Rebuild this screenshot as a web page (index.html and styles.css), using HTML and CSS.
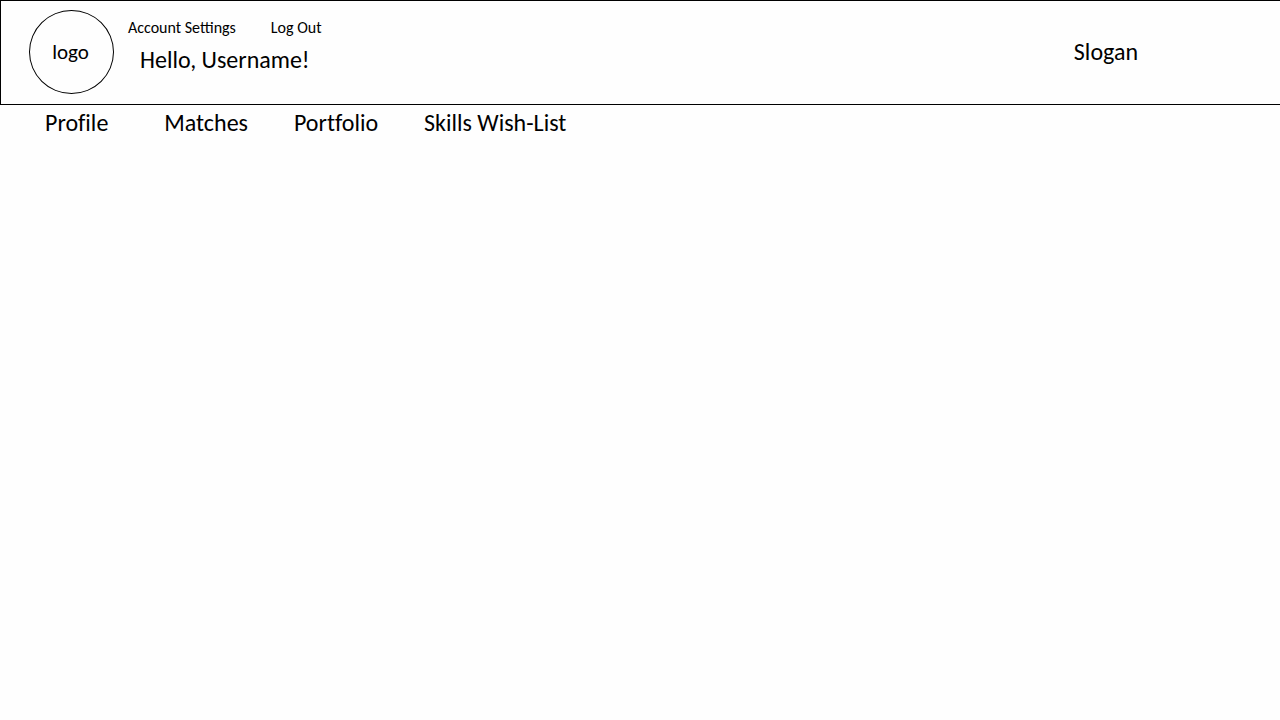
FILE: index.html
```html
<!DOCTYPE html>
<html lang="en">
<head>
<meta charset="utf-8">
<meta name="viewport" content="width=device-width, initial-scale=1">
<title>Home</title>
<link rel="stylesheet" href="styles.css">
</head>
<body>
<header class="banner">
  <a class="logo" href="#">logo</a>
  <div class="account">
    <nav class="account-links" aria-label="Account">
      <a href="#">Account Settings</a>
      <a href="#">Log Out</a>
    </nav>
    <p class="greeting">Hello, Username!</p>
  </div>
  <p class="slogan">Slogan</p>
</header>
<nav class="tabs" aria-label="Main">
  <a href="#">Profile</a>
  <a href="#">Matches</a>
  <a href="#">Portfolio</a>
  <a href="#">Skills Wish-List</a>
</nav>
</body>
</html>
```

FILE: styles.css
```css
* {
  box-sizing: border-box;
}

body {
  margin: 0;
  background: #fefefe;
  color: #000;
  font-family: Carlito, Calibri, Lato, sans-serif;
  font-size: 24px;
  line-height: 28px;
}

a {
  color: inherit;
  text-decoration: none;
}

p {
  margin: 0;
}

.banner {
  display: flex;
  align-items: flex-start;
  padding: 9px 142px 10px 28px;
  border: 1px solid #000;
  border-right: 0;
}

.logo {
  display: flex;
  align-items: center;
  justify-content: center;
  width: 85px;
  height: 84px;
  padding-right: 2px;
  border: 1px solid #000;
  border-radius: 50%;
  font-size: 21px;
}

.account {
  padding: 8px 0 0 14px;
}

.account-links {
  display: flex;
  gap: 35px;
  font-size: 16px;
  line-height: 20px;
}

.greeting {
  padding: 8px 0 0 12px;
}

.slogan {
  margin-left: auto;
  padding-top: 28px;
}

.tabs {
  display: flex;
  flex-wrap: wrap;
  gap: 46px;
  padding: 4px 45px;
  font-variant-ligatures: none;
}

.tabs a:first-child {
  margin-right: 10px;
}
```
